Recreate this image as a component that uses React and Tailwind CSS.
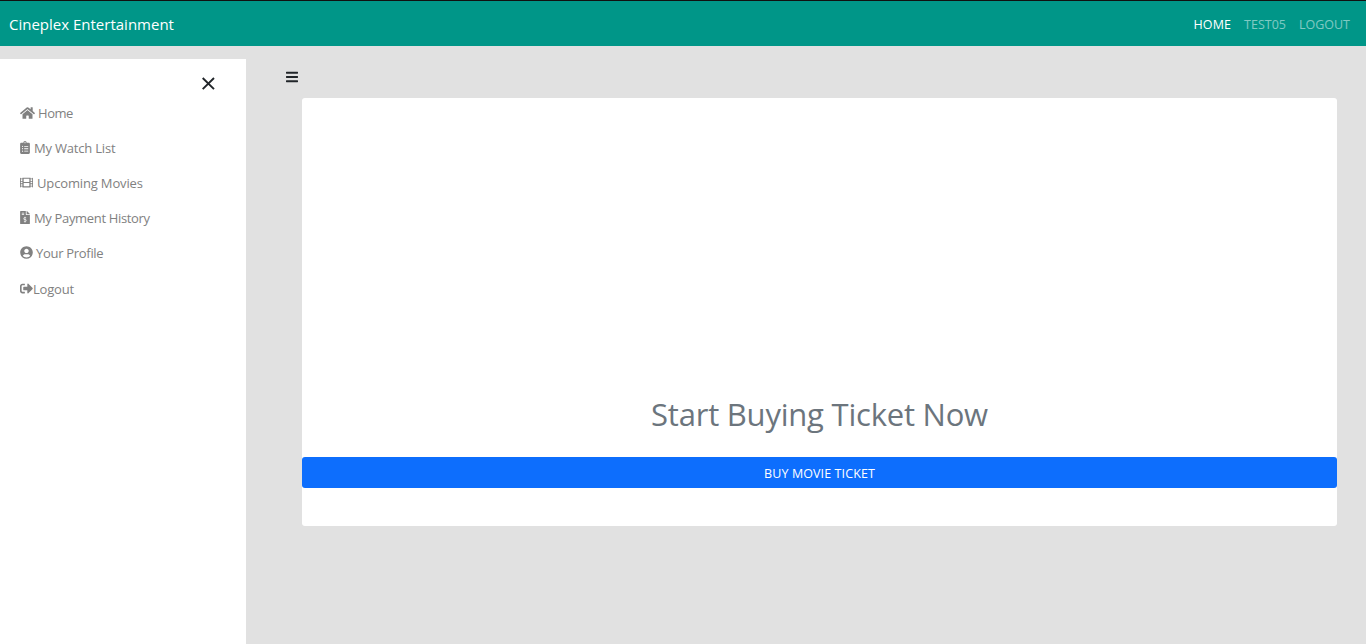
import {
  FaHome,
  FaClipboardList,
  FaFilm,
  FaFileInvoiceDollar,
  FaUserCircle,
  FaSignOutAlt,
  FaBars,
} from 'react-icons/fa';

const links = [
  { label: 'Home', Icon: FaHome, icon: 'w-[15px] h-[14px] mr-[3px]', text: 'tracking-[-0.45px]', row: 'h-[35px]' },
  { label: 'My Watch List', Icon: FaClipboardList, icon: 'w-[10px] h-[13px] mr-1', text: 'tracking-[-0.2px]', row: 'h-[35px]' },
  { label: 'Upcoming Movies', Icon: FaFilm, icon: 'w-[13px] h-[13px] mr-1', text: 'tracking-[-0.15px]', row: 'h-[35px]' },
  { label: 'My Payment History', Icon: FaFileInvoiceDollar, icon: 'w-[10px] h-[13px] mr-1', text: 'tracking-[-0.34px]', row: 'h-[35px]' },
  { label: 'Your Profile', Icon: FaUserCircle, icon: 'w-[13px] h-[13px] mr-[3px]', text: 'tracking-[-0.3px]', row: 'h-[35px]' },
  { label: 'Logout', Icon: FaSignOutAlt, icon: 'w-[13px] h-[13px]', text: 'tracking-[-0.2px]', row: 'h-[37px]' },
];

function Navbar() {
  return (
    <header className="flex h-[46px] items-center justify-between border-t border-[#111] bg-[#009688] pl-[9px] pr-4 pt-[2px]">
      <a className="text-[15px] text-white">Cineplex Entertainment</a>
      <nav className="flex gap-[13px] pt-[2px] text-[12.5px] text-white/50">
        <a className="tracking-[0.1px] text-white">HOME</a>
        <a>TEST05</a>
        <a>LOGOUT</a>
      </nav>
    </header>
  );
}

function Sidebar() {
  return (
    <aside className="mt-[13px] w-[246px] shrink-0 bg-white pt-[14px]">
      <button className="ml-[202px] flex h-[22px] w-3 items-center">
        <svg viewBox="0 0 12 12" className="h-3 w-3 overflow-visible stroke-[#212529]" strokeWidth="1.9" fill="none">
          <path d="M0.7 0 12 11.2M12 0 0.7 11.2" />
        </svg>
      </button>
      <nav className="pl-5 text-[13px] leading-[20px] text-[#818181]">
        {links.map(({ label, Icon, icon, text, row }) => (
          <a key={label} className={`flex items-center ${row}`}>
            <Icon className={`shrink-0 ${icon}`} preserveAspectRatio="xMidYMid meet" />
            <span className={`whitespace-nowrap ${text}`}>{label}</span>
          </a>
        ))}
      </nav>
    </aside>
  );
}

export default function App() {
  return (
    <div className="flex h-[644px] w-[1366px] flex-col overflow-hidden bg-[#e1e1e1] font-['Open_Sans','Noto_Sans',sans-serif]">
      <Navbar />
      <div className="flex flex-1">
        <Sidebar />
        <main className="flex-1 pl-10 pr-[29px] pt-6">
          <FaBars className="h-[14px] w-[12px] text-[#212529]" />
          <section className="ml-4 mt-[14px] flex h-[428px] flex-col rounded-[3px] bg-white pt-[293px] text-center">
            <h2 className="h-[66px] text-[31px] leading-[46px] tracking-[-0.22px] text-[#6c757d]">
              Start Buying Ticket Now
            </h2>
            <button className="h-[31px] rounded-[3px] bg-[#0d6efd] pt-[3px] text-[12.5px] tracking-[0.1px] text-white">
              BUY MOVIE TICKET
            </button>
          </section>
        </main>
      </div>
    </div>
  );
}
